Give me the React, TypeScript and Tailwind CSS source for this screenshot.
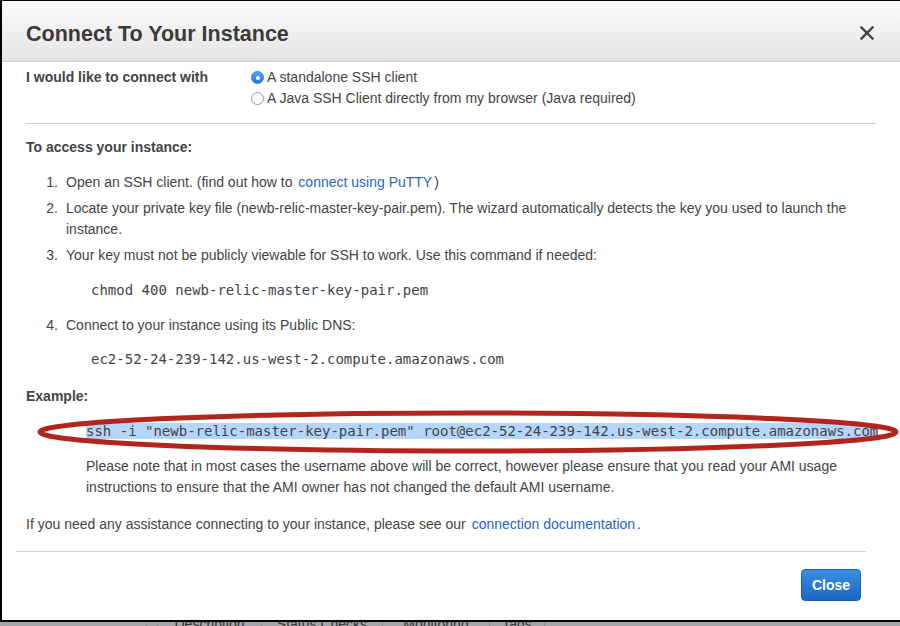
import React from 'react';

const mono = { fontFamily: '"DejaVu Sans Mono", "Liberation Mono", monospace' };

const Radio: React.FC<{ checked?: boolean; label: string }> = ({ checked, label }) => (
  <label className="flex h-[21px] items-center">
    {checked ? (
      <span className="mr-[3px] flex h-[13px] w-[13px] items-center justify-center rounded-full border border-[#2a7fe0] bg-gradient-to-b from-[#5aa6f5] to-[#1f74e0]">
        <span className="h-[4px] w-[4px] rounded-full bg-white" />
      </span>
    ) : (
      <span className="mr-[3px] h-[13px] w-[13px] rounded-full border border-[#9a9a9a] bg-white" />
    )}
    <span>{label}</span>
  </label>
);

const Step: React.FC<{ n: number; children: React.ReactNode; className?: string }> = ({ n, children, className }) => (
  <li className={`flex ${className ?? ''}`}>
    <span className="w-[40px] shrink-0 pr-[8px] text-right">{n}.</span>
    <div className="flex-1">{children}</div>
  </li>
);

export default function App() {
  return (
    <div
      className="flex h-[626px] w-[900px] flex-col overflow-hidden bg-white text-[14px] leading-[21px] text-[#444]"
      style={{ fontFamily: '"Liberation Sans", Arial, sans-serif' }}
    >
      <div className="relative flex flex-1 flex-col border-b-2 border-l-2 border-t border-black">
        {/* header */}
        <div className="flex h-[61px] shrink-0 items-center justify-between border-b border-[#cfcfcf] bg-gradient-to-b from-[#fbfbfb] to-[#e5e5e5] pl-[24px] pr-[26px]">
          <h1 className="pt-[6px] text-[21.5px] font-bold text-[#3a3a3a]">Connect To Your Instance</h1>
          <svg width="14" height="14" viewBox="0 0 14 14" className="mt-[4px]">
            <path d="M1.5 1.5 L12.5 12.5 M12.5 1.5 L1.5 12.5" stroke="#444" strokeWidth="2.4" strokeLinecap="square" />
          </svg>
        </div>

        {/* body */}
        <div className="pl-[24px] pr-[24px] pt-[5px]">
          <div className="flex">
            <div className="w-[225px] font-bold">I would like to connect with</div>
            <div className="flex flex-col">
              <Radio checked label="A standalone SSH client" />
              <Radio label="A Java SSH Client directly from my browser (Java required)" />
            </div>
          </div>

          <div className="mt-[14px] h-px bg-[#d0d0d0]" />

          <div className="mt-[13px] font-bold">To access your instance:</div>

          <ol className="mt-[14px] flex flex-col">
            <Step n={1}>
              Open an SSH client. (find out how to{' '}
              <a className="px-[2px] text-[#2b64c5]">connect using PuTTY</a>)
            </Step>
            <Step n={2} className="mt-[5px]">
              Locate your private key file (newb-relic-master-key-pair.pem). The wizard automatically detects the key you used to launch the instance.
            </Step>
            <Step n={3} className="mt-[5px]">
              Your key must not be publicly viewable for SSH to work. Use this command if needed:
              <div className="mt-[14px] pl-[25px] text-[14px] text-[#444]" style={mono}>
                chmod 400 newb-relic-master-key-pair.pem
              </div>
            </Step>
            <Step n={4} className="mt-[14px]">
              Connect to your instance using its Public DNS:
              <div className="mt-[13px] pl-[25px] text-[14px]" style={mono}>
                ec2-52-24-239-142.us-west-2.compute.amazonaws.com
              </div>
            </Step>
          </ol>

          <div className="mt-[16px] font-bold">Example:</div>

          <div className="mt-[14px] pl-[60px]">
            <div className="whitespace-nowrap">
              <span className="bg-[#b5d5fb] text-[14px] leading-[19px]" style={mono}>
                ssh -i "newb-relic-master-key-pair.pem" root@ec2-52-24-239-142.us-west-2.compute.amazonaws.com
              </span>
            </div>
            <p className="mt-[14px]">
              Please note that in most cases the username above will be correct, however please ensure that you read your AMI usage instructions to ensure that the AMI owner has not changed the default AMI username.
            </p>
          </div>

          <p className="mt-[16px]">
            If you need any assistance connecting to your instance, please see our{' '}
            <a className="px-[2px] text-[#2b64c5]">connection documentation</a>.
          </p>
        </div>

        <div className="ml-[14px] mr-[34px] mt-[16px] h-px bg-[#d0d0d0]" />

        <div className="flex justify-end pr-[39px] pt-[17px]">
          <button className="h-[32px] w-[60px] rounded-[4px] border border-[#1d62b8] bg-gradient-to-b from-[#3b8fe2] to-[#1a66c2] text-[14px] font-bold text-white">
            Close
          </button>
        </div>

        {/* red annotation ellipse */}
        <svg className="pointer-events-none absolute left-[34px] top-[406px]" width="866" height="52" viewBox="0 0 866 52">
          <ellipse cx="432" cy="25" rx="428" ry="19" fill="none" stroke="#b3241c" strokeWidth="5" />
        </svg>
      </div>

      {/* background page tabs peeking below */}
      <div className="relative h-[4px] shrink-0 overflow-hidden bg-[#a1a6ab]">
        <div className="absolute left-[146px] top-[-5px] flex text-[14px] leading-[14px] text-[#333]">
          <span className="w-[12px] border-l border-r border-[#8a8f94]" />
          <span className="w-[104px] border-r border-[#8a8f94] text-center">Description</span>
          <span className="w-[121px] border-r border-[#8a8f94] text-center">Status Checks</span>
          <span className="w-[107px] border-r border-[#8a8f94] text-center">Monitoring</span>
          <span className="w-[55px] border-r border-[#8a8f94] text-center">Tags</span>
        </div>
      </div>
    </div>
  );
}
